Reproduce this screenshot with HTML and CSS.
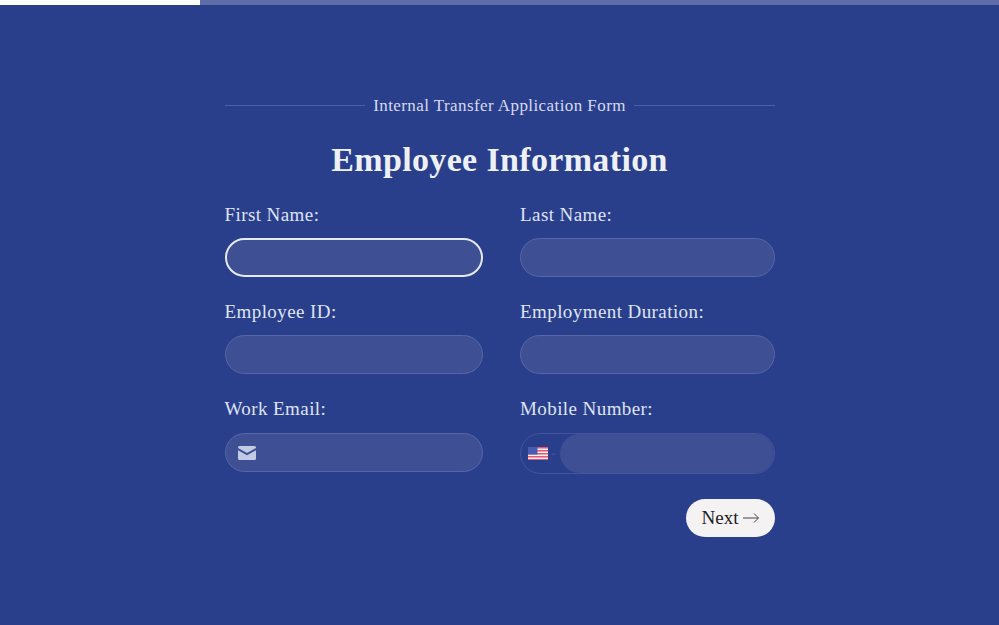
FILE: index.html
```html
<!DOCTYPE html>
<html lang="en">
<head>
    <meta charset="UTF-8">
    <meta name="viewport" content="width=device-width, initial-scale=1.0">
    <title>Employee Information</title>
    <link rel="stylesheet" href="styles.css">
</head>
<body>
    <div class="progress"><div class="progress-fill"></div></div>

    <main class="form-wrap">
        <div class="eyebrow"><span>Internal Transfer Application Form</span></div>
        <h1>Employee Information</h1>

        <form class="fields">
            <div class="field">
                <label for="first-name">First Name:</label>
                <input class="text-input focused" type="text" id="first-name">
            </div>
            <div class="field">
                <label for="last-name">Last Name:</label>
                <input class="text-input" type="text" id="last-name">
            </div>
            <div class="field">
                <label for="employee-id">Employee ID:</label>
                <input class="text-input" type="text" id="employee-id">
            </div>
            <div class="field">
                <label for="duration">Employment Duration:</label>
                <input class="text-input" type="text" id="duration">
            </div>
            <div class="field field-last">
                <label for="email">Work Email:</label>
                <div class="email-box">
                    <svg class="mail-icon" viewBox="0 0 18 14" width="18" height="14" aria-hidden="true">
                        <path d="M1.5 0h15A1.5 1.5 0 0 1 18 1.500v.6L9 7 0 2.100v-.6A1.500 1.500 0 0 1 1.500 0z"/>
                        <path d="M0 4.300l9 4.900 9-4.900v8.200a1.500 1.500 0 0 1-1.500 1.500h-15A1.500 1.500 0 0 1 0 12.500z"/>
                    </svg>
                    <input type="text" id="email">
                </div>
            </div>
            <div class="field field-last">
                <label for="mobile">Mobile Number:</label>
                <div class="phone-box">
                    <div class="country">
                        <svg class="flag" viewBox="0 0 20 13" width="20" height="13" aria-hidden="true">
                            <rect width="20" height="13" fill="#f4f1f4"/>
                            <path d="M0 0h20v1.500H0zM0 3h20v1.500H0zM0 6h20v1.500H0zM0 9h20v1.500H0zM0 12h20v1H0z" fill="#e8566f"/>
                            <rect width="9.500" height="7.500" fill="#4a5cb0"/>
                        </svg>
                        <span class="caret"></span>
                    </div>
                    <input type="text" id="mobile">
                </div>
            </div>
        </form>

        <div class="actions">
            <button class="next" type="button">
                Next
                <svg class="arrow" viewBox="0 0 16 10" width="16" height="10" aria-hidden="true">
                    <path d="M0 5h15.500M11 .5l4.500 4.500-4.500 4.500"/>
                </svg>
            </button>
        </div>
    </main>
</body>
</html>
```

FILE: styles.css
```css
* {
    box-sizing: border-box;
}

body {
    margin: 0;
    height: 625px;
    overflow: hidden;
    background-color: #2a3f8c;
    color: #e6e9f5;
    font-family: 'Liberation Serif', 'DejaVu Serif', serif;
}

.progress {
    height: 5px;
    background-color: #5e6ca8;
}

.progress-fill {
    width: 200px;
    height: 5px;
    background-color: #fff;
}

.form-wrap {
    width: 550px;
    margin: 0 auto;
    padding-top: 89px;
}

.eyebrow {
    display: flex;
    align-items: center;
    gap: 8px;
    height: 24px;
    font-size: 17px;
    letter-spacing: 0.42px;
    color: #d5daee;
}

.eyebrow::before,
.eyebrow::after {
    content: "";
    flex: 1;
    height: 1px;
    margin-bottom: 2px;
    background-color: #4d5fa6;
}

h1 {
    margin: 22px 0 0;
    height: 40px;
    line-height: 40px;
    text-align: center;
    font-size: 34px;
    font-weight: 700;
    letter-spacing: 0.35px;
    color: #eef0f8;
}

.fields {
    display: grid;
    grid-template-columns: 258.5px 254.5px;
    column-gap: 37px;
    row-gap: 23px;
    margin-top: 23px;
}

.field label {
    display: block;
    height: 24px;
    line-height: 24px;
    margin-bottom: 11px;
    font-size: 19px;
    letter-spacing: 0.42px;
    color: #dfe3f3;
}

.field-last label {
    margin-bottom: 12px;
}

.text-input,
.email-box {
    display: block;
    width: 100%;
    height: 39px;
    border: 1px solid #5766a8;
    border-radius: 20px;
    background-color: #3f4f94;
    outline: none;
}

.text-input.focused {
    border: 2px solid #e6e9f5;
}

.email-box {
    display: flex;
    align-items: center;
    padding-left: 12px;
}

.email-box input,
.phone-box input {
    flex: 1;
    min-width: 0;
    height: 100%;
    border: none;
    background: none;
    outline: none;
}

.mail-icon {
    flex: none;
    fill: #c3cae4;
}

.phone-box {
    display: flex;
    height: 41px;
    border: 1px solid #44549f;
    border-radius: 21px;
}

.country {
    display: flex;
    align-items: center;
    flex: none;
    width: 39px;
    padding-left: 7px;
}

.flag {
    flex: none;
}

.caret {
    width: 3px;
    height: 3px;
    margin-left: 4px;
    border-right: 1px solid #44549f;
    border-bottom: 1px solid #44549f;
    transform: rotate(45deg);
}

.phone-box input {
    border-radius: 20px;
    background-color: #3f4f94;
}

.actions {
    display: flex;
    justify-content: flex-end;
    margin-top: 25px;
}

.next {
    display: flex;
    align-items: center;
    justify-content: center;
    gap: 5px;
    height: 38px;
    width: 89px;
    padding: 0 0 0 1px;
    border: none;
    border-radius: 19px;
    background-color: #f4f2f3;
    color: #1c1c24;
    font-family: inherit;
    font-size: 19px;
}

.arrow {
    fill: none;
    stroke: #45454d;
    stroke-width: 1;
}
```
